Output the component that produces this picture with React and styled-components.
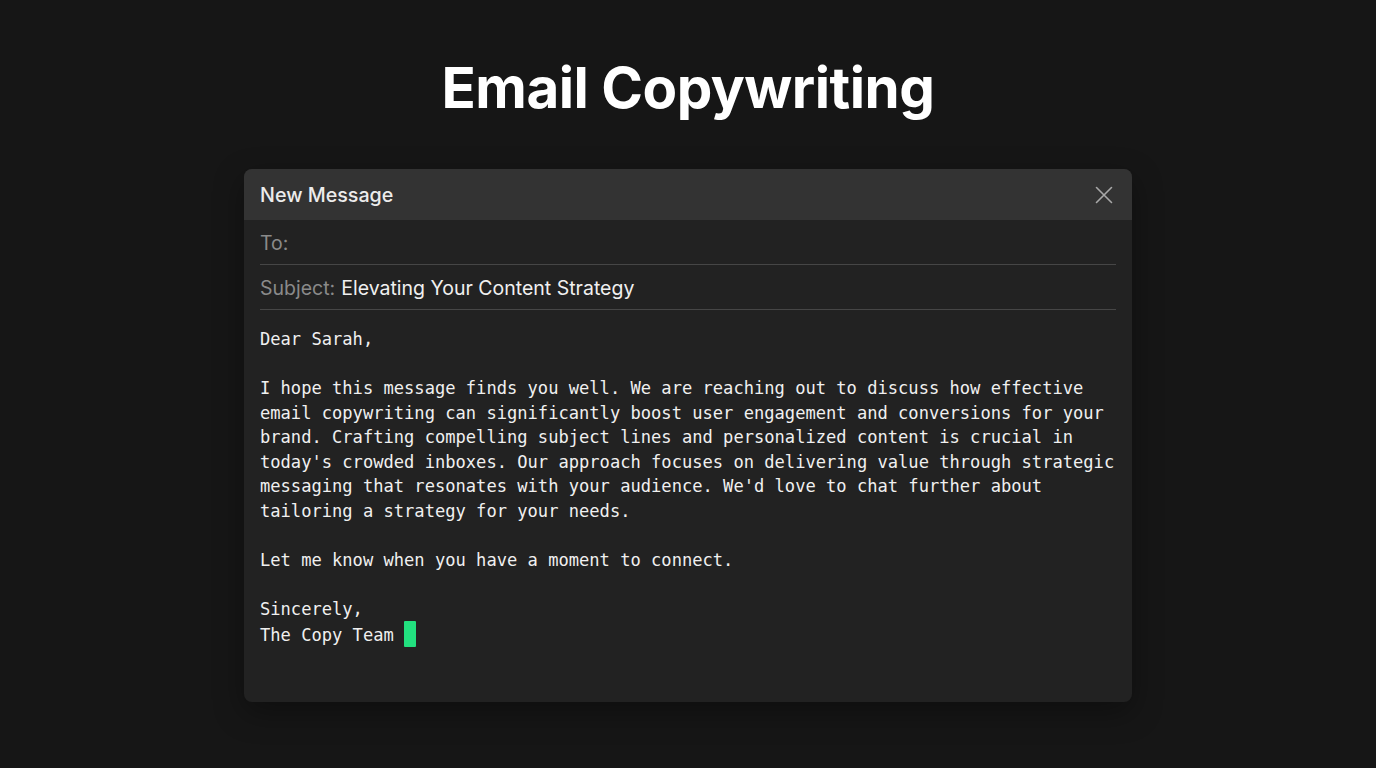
import React from "react";
import styled, { createGlobalStyle } from "styled-components";

const Global = createGlobalStyle`
  html, body { margin: 0; padding: 0; background: #161616; }
  body { font-family: Inter, "Noto Sans", sans-serif; }
`;

const Page = styled.div`
  min-height: 768px;
  background: #161616;
  display: flex;
  flex-direction: column;
  align-items: center;
  padding-top: 52px;
  box-sizing: border-box;
`;

const Title = styled.h1`
  margin: 0;
  font-family: Inter, sans-serif;
  font-weight: 700;
  font-size: 56.5px;
  line-height: 72px;
  letter-spacing: -0.5px;
  color: #ffffff;
`;

const Card = styled.div`
  margin-top: 45px;
  width: 888px;
  height: 533px;
  background: #222222;
  border-radius: 8px;
  overflow: hidden;
  box-shadow: 0 10px 30px rgba(0, 0, 0, 0.35);
  display: flex;
  flex-direction: column;
`;

const Header = styled.div`
  height: 51px;
  background: #333333;
  display: flex;
  align-items: center;
  justify-content: space-between;
  padding: 0 19px 0 16px;
  flex-shrink: 0;
`;

const HeaderTitle = styled.div`
  font-size: 19.7px;
  font-weight: 500;
  color: #ececec;
`;

const Close = styled.button`
  background: none;
  border: 0;
  padding: 0;
  display: flex;
  color: #a8a8a8;
  cursor: pointer;
`;

const Fields = styled.div`
  padding: 0 16px;
`;

const Field = styled.div`
  box-sizing: border-box;
  height: 45px;
  border-bottom: 1px solid #464646;
  display: flex;
  align-items: center;
  font-size: 19.5px;
  color: #f0f0f0;
  padding-top: 1px;
`;

const Label = styled.span`
  color: #8a8a8a;
  margin-right: 6px;
`;

const Body = styled.div`
  padding: 17px 16px 0;
  font-family: "DejaVu Sans Mono", "Liberation Mono", monospace;
  font-size: 17.1px;
  line-height: 24.5px;
  color: #f0f0f0;
  white-space: pre;
`;

const Cursor = styled.span`
  display: inline-block;
  width: 12px;
  height: 26px;
  background: #22e07f;
  border-radius: 1px;
  vertical-align: -6px;
`;

const text = `Dear Sarah,

I hope this message finds you well. We are reaching out to discuss how effective
email copywriting can significantly boost user engagement and conversions for your
brand. Crafting compelling subject lines and personalized content is crucial in
today's crowded inboxes. Our approach focuses on delivering value through strategic
messaging that resonates with your audience. We'd love to chat further about
tailoring a strategy for your needs.

Let me know when you have a moment to connect.

Sincerely,
The Copy Team `;

export default function App() {
  return (
    <>
      <Global />
      <Page>
        <Title>Email Copywriting</Title>
        <Card>
          <Header>
            <HeaderTitle>New Message</HeaderTitle>
            <Close aria-label="Close">
              <svg width="18" height="18" viewBox="0 0 18 18" fill="none" stroke="currentColor" strokeWidth="1.6" strokeLinecap="round">
                <path d="M1.5 1.5L16.5 16.5M16.5 1.5L1.5 16.5" />
              </svg>
            </Close>
          </Header>
          <Fields>
            <Field>
              <Label>To:</Label>
            </Field>
            <Field>
              <Label>Subject:</Label>
              Elevating Your Content Strategy
            </Field>
          </Fields>
          <Body>
            {text}
            <Cursor />
          </Body>
        </Card>
      </Page>
    </>
  );
}
